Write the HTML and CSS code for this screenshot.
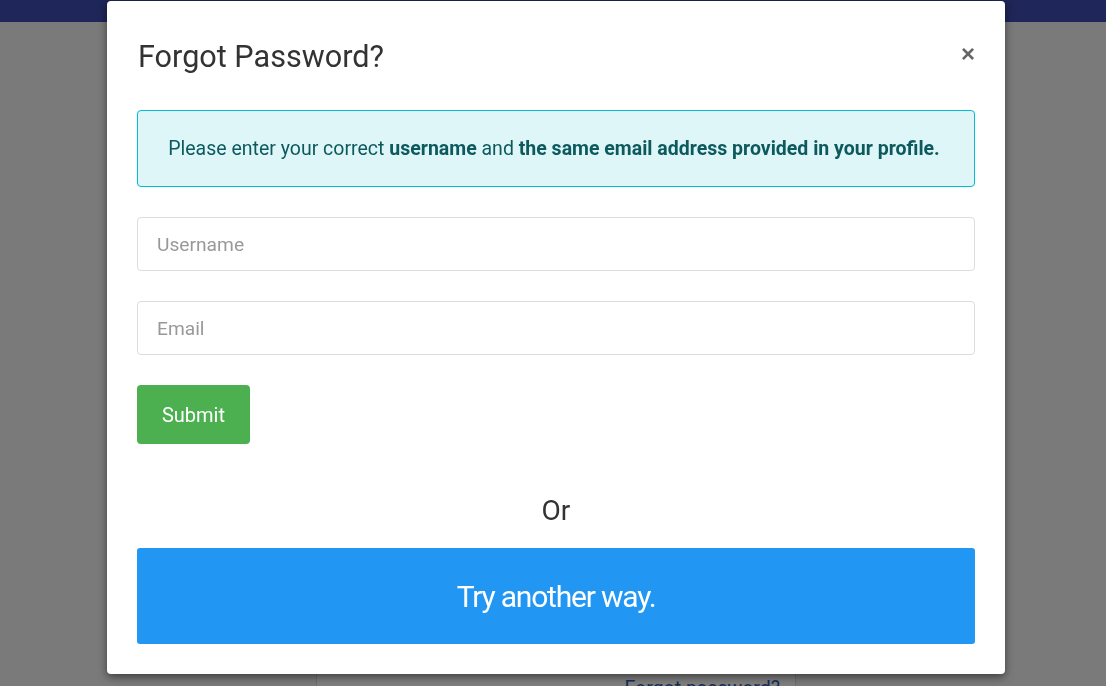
FILE: index.html
```html
<!DOCTYPE html>
<html>
<head>
<meta charset="utf-8">
<link rel="stylesheet" href="styles.css">
</head>
<body>
<div class="topbar"></div>
<div class="page">
  <div class="login-card">
    <a class="forgot-link" href="#">Forgot password?</a>
  </div>
</div>
<div class="backdrop"></div>
<div class="modal">
  <div class="modal-header">
    <h2 class="modal-title">Forgot Password?</h2>
    <span class="close">&times;</span>
  </div>
  <div class="alert">Please enter your correct <b>username</b> and <b>the same email address provided in your profile.</b></div>
  <div class="field"><input class="input" type="text" placeholder="Username"></div>
  <div class="field"><input class="input" type="text" placeholder="Email"></div>
  <button class="btn-submit">Submit</button>
  <div class="or">Or</div>
  <button class="btn-alt">Try another way.</button>
</div>
</body>
</html>
```
FILE: styles.css
```css
html, body {
  margin: 0;
  padding: 0;
  height: 100%;
  overflow: hidden;
  font-family: Roboto, "Liberation Sans", sans-serif;
}
body {
  background: #f4f4f4;
}
.topbar {
  height: 22px;
  background: #3f4db3;
}
.page {
  padding-left: 316px;
}
.login-card {
  margin-top: 630px;
  width: 480px;
  height: 120px;
  border: 1px solid #ddd;
  background: #fff;
  display: flex;
  justify-content: flex-end;
  align-items: flex-start;
  padding: 25px 15px 0 0;
  box-sizing: border-box;
}
.forgot-link {
  color: #2a5db0;
  font-size: 19.5px;
  line-height: 22px;
  text-decoration: underline;
}
.backdrop {
  position: fixed;
  inset: 0;
  background: rgba(0,0,0,0.5);
}
.modal {
  position: absolute;
  left: 107px;
  top: 1px;
  width: 898px;
  box-sizing: border-box;
  padding: 0 30px 30px 30px;
  background: #fff;
  border-radius: 4px;
  box-shadow: 0 3px 9px rgba(0,0,0,0.5);
}
.modal-header {
  display: flex;
  justify-content: space-between;
  align-items: center;
  height: 109px;
  box-sizing: border-box;
  padding-top: 2px;
}
.modal-title {
  margin: 0 0 0 1px;
  font-size: 30.6px;
  font-weight: 400;
  color: #333;
  line-height: 1.1;
}
.close {
  font-size: 24px;
  font-weight: 700;
  color: #666;
  line-height: 1;
  margin-top: -6px;
  font-family: "Liberation Sans", Arial, sans-serif;
}
.alert {
  box-sizing: border-box;
  height: 77px;
  border: 1px solid #00bcd4;
  background: #dff6f8;
  border-radius: 4px;
  color: #0c5a5e;
  font-size: 19.5px;
  display: flex;
  align-items: center;
  justify-content: center;
  padding-right: 4px;
  white-space: pre;
}
.alert b {
  font-weight: 700;
}
.field {
  margin-top: 30px;
}
.input {
  display: block;
  width: 100%;
  box-sizing: border-box;
  height: 54px;
  border: 1px solid #ddd;
  border-radius: 4px;
  padding: 0 19px;
  font-family: Roboto, "Liberation Sans", sans-serif;
  font-size: 19.2px;
  color: #333;
  background: #fff;
  outline: none;
}
.input::placeholder {
  color: #999;
}
.btn-submit {
  display: block;
  margin-top: 30px;
  width: 113px;
  height: 59px;
  border: none;
  border-radius: 4px;
  background: #4caf50;
  color: #fff;
  font-family: Roboto, "Liberation Sans", sans-serif;
  font-size: 20px;
  padding: 0;
}
.or {
  margin-top: 47px;
  text-align: center;
  font-size: 28px;
  color: #333;
  line-height: 40px;
}
.btn-alt {
  display: block;
  margin-top: 17px;
  width: 100%;
  height: 96px;
  border: none;
  border-radius: 3px;
  background: #2196f3;
  color: #fff;
  font-family: Roboto, "Liberation Sans", sans-serif;
  font-size: 30px;
  letter-spacing: -1.2px;
  padding: 0;
}
```
